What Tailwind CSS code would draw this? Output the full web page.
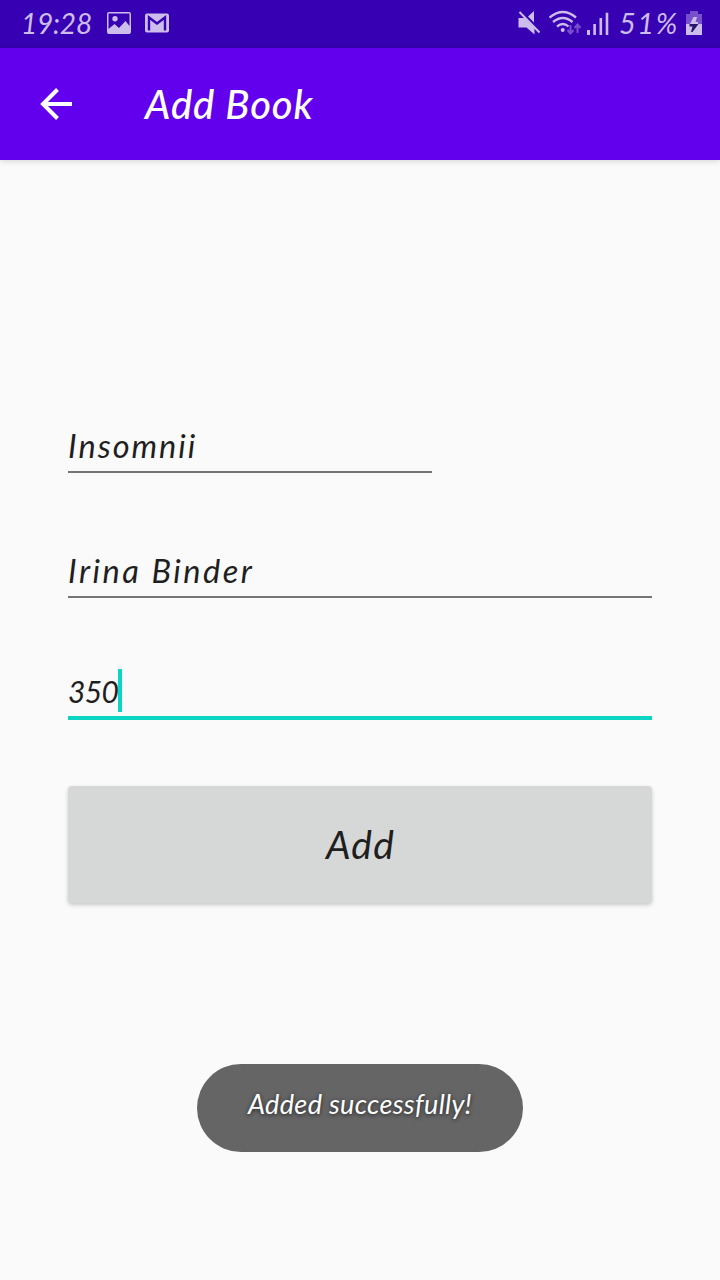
<!DOCTYPE html>
<html lang="en">
<head>
<meta charset="utf-8">
<title>Add Book</title>
<script src="https://cdn.jsdelivr.net/npm/@tailwindcss/browser@4"></script>
</head>
<body class="bg-[#fafafa]">
<div class="flex h-[1280px] w-[720px] flex-col overflow-hidden bg-[#fafafa] font-['Lato',sans-serif] text-[#1f1f1f] italic">
  <div class="flex h-12 shrink-0 items-center bg-[#3700b3] pr-[18px] pl-[21px] text-[#cdbdec]">
    <span class="w-[86px] pb-[2px] text-[28px] leading-[46px] tracking-[-0.2px] whitespace-nowrap">19:28</span>
    <svg class="h-6 w-6 -translate-y-px" viewBox="0 0 24 24" fill="currentColor"><path fill-rule="evenodd" d="M2 1h20a2 2 0 0 1 2 2v18a2 2 0 0 1-2 2H2a2 2 0 0 1-2-2V3a2 2 0 0 1 2-2zm-.5 1.500v15.500l6-5 4.500 4 6.500-7 4 5V2.500zM8 5a2.700 2.700 0 1 1 0 5.400A2.700 2.700 0 0 1 8 5z"/></svg>
    <svg class="ml-[14px] h-6 w-6 -translate-y-px" viewBox="0 0 24 24" fill="none" stroke="#3700b3"><rect y="2.500" width="24" height="19" rx="2" fill="#cdbdec" stroke="none"/><path d="M4 19.500V6.500l8 6 8-6v13" stroke-width="2.400"/></svg>
    <div class="ml-auto flex items-center">
      <svg class="h-[26px] w-6 -translate-y-px" viewBox="0 0 24 26" fill="currentColor"><path d="M.5 8h6l10 10v6.500l-8-7h-8zM10 6.500 16 1v11.500z"/><path d="m1.500 2 20 20.500" fill="none" stroke="currentColor" stroke-width="2"/></svg>
      <svg class="ml-[7px] h-[26px] w-[33px] -translate-y-px" viewBox="0 0 33 26" fill="none" stroke="currentColor" stroke-width="2.300"><path d="M.5 7.500Q14-3.500 27 7.500M4 12q10-8 19.500 0M8 16.500q6-5 11.500 0"/><circle cx="13.700" cy="20" r="2" fill="currentColor" stroke="none"/><path d="M21.500 15v8M18.500 20l3 3.500 3-3.500M28.500 23v-8M25.500 18l3-3.500 3 3.500" stroke="#7950cc" stroke-width="2"/></svg>
      <svg class="ml-[5px] h-6 w-[22px]" viewBox="0 0 22 24" fill="currentColor"><path d="M0 18h3v5H0zM6.300 12h2.600v11H6.300zM12.500 6h2.600v17h-2.600zM18.700 .8h2.600V23h-2.600z"/></svg>
      <span class="ml-[10px] w-[67px] pb-[2px] text-[29px] leading-[46px] tracking-[1.5px] whitespace-nowrap">51%</span>
      <svg class="h-6 w-4 -translate-y-px" viewBox="0 0 16 24"><path fill="#7950cc" d="M4 0h8v3h4v10H0V3h4z"/><path fill="#cdbdec" d="M0 13h16v11H0zM7.500 6H11l-1.500 5H12v2H4z"/><path fill="#28166b" d="M3.500 13h9L6.500 21H5l1.500-5.500h-3z"/></svg>
    </div>
  </div>
  <header class="flex h-28 shrink-0 items-center bg-[#6200ee] pl-10 text-white shadow-[0_1px_6px_rgba(0,0,0,0.16)]">
    <svg class="h-8 w-8" viewBox="0 0 32 32" fill="none" stroke="currentColor" stroke-width="4"><path d="M32 16H3M17.500 1.500 3 16l14.500 14.500"/></svg>
    <h1 class="ml-[73px] text-[40px] leading-[56px] font-medium tracking-[0.9px] whitespace-nowrap">Add Book</h1>
  </header>
  <main class="flex flex-col px-[68px] pt-[262px]">
    <div class="flex h-[51px] w-[364px] items-start border-b-2 border-[#757575] text-[32.5px] leading-[48px] tracking-[2px]"><span>Insomnii</span></div>
    <div class="mt-[74px] flex h-[51px] items-start border-b-2 border-[#757575] text-[32.5px] leading-[48px] tracking-[2.5px]"><span>Irina Binder</span></div>
    <div class="mt-[71px] flex h-[51px] items-start border-b-4 border-[#0cd6c3] text-[30px] leading-[44px]"><span class="w-[50px] tracking-[-0.7px]">350</span><span class="h-[43px] w-1 bg-[#0cd6c3]"></span></div>
    <button class="mt-[66px] h-[117px] rounded-[4px] bg-[#d6d8d7] pb-px pl-px text-[39px] tracking-[1.2px] italic shadow-[0_2px_4px_rgba(0,0,0,0.2)]">Add</button>
  </main>
  <div class="mt-[161px] flex h-[88px] w-[326px] items-center justify-center self-center rounded-full bg-[#656565] pb-[7px] text-[27px] tracking-[0.35px] whitespace-nowrap text-white [text-shadow:0_1px_4px_rgba(0,0,0,0.7)]">Added successfully!</div>
</div>
</body>
</html>
